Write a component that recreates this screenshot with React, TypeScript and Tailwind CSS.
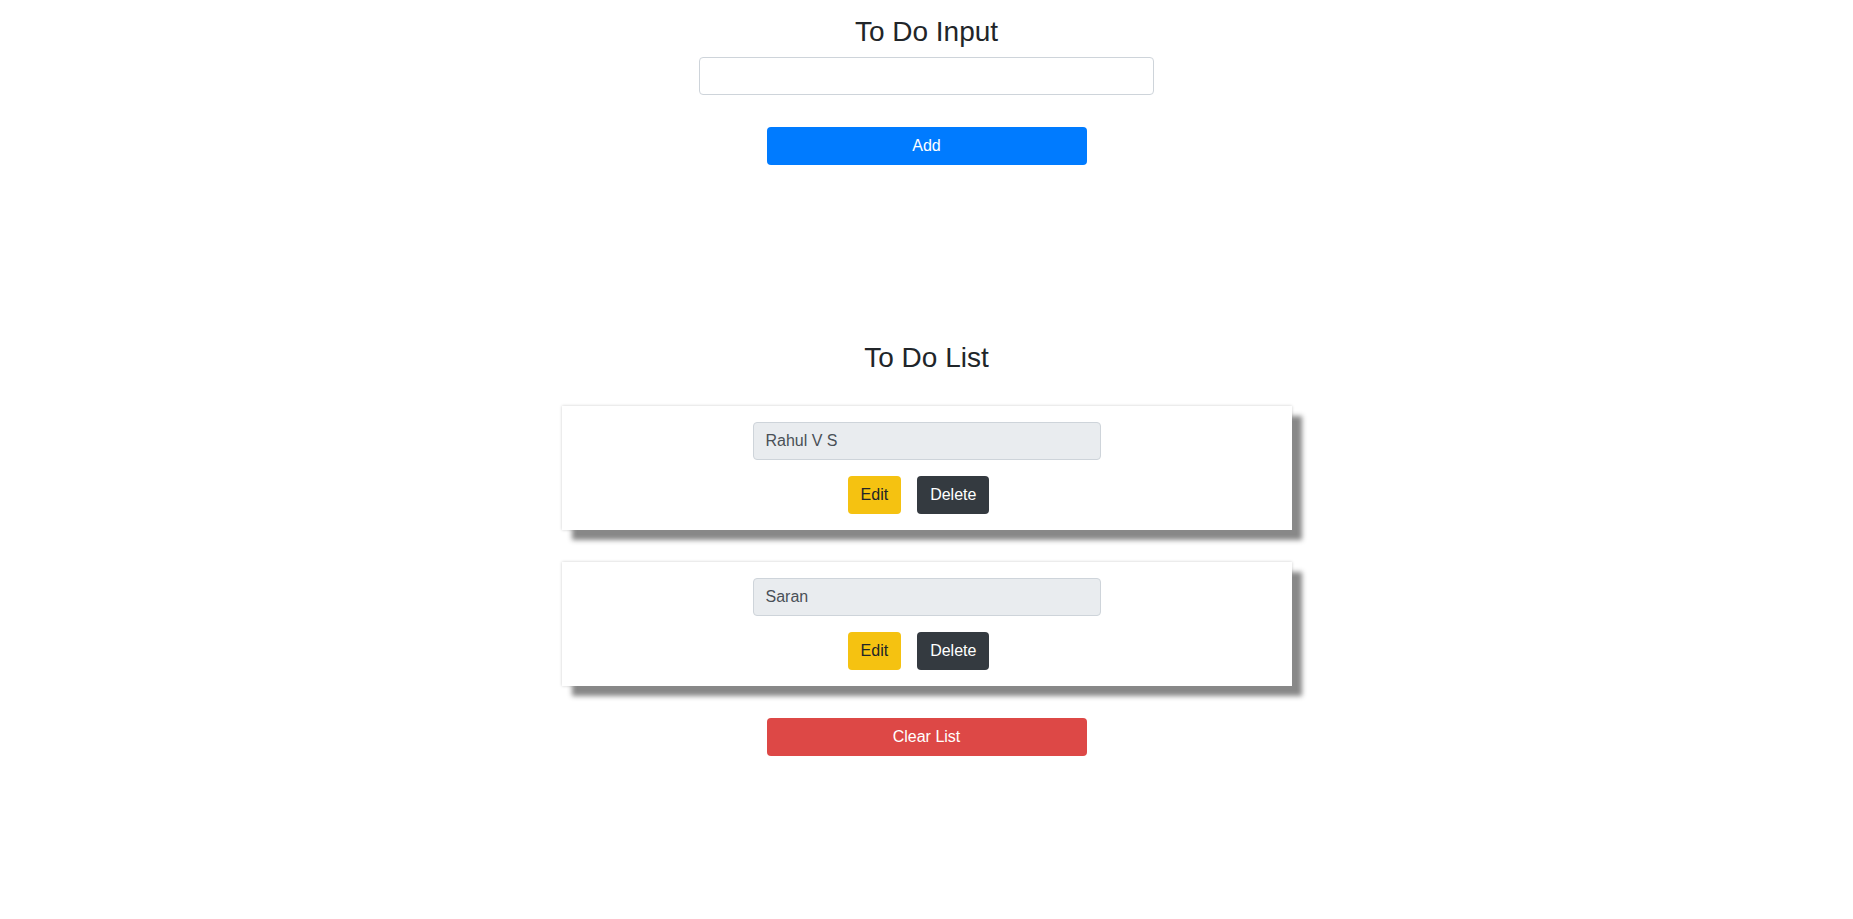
import { useState } from 'react'

type Item = { id: number; text: string }

export default function App() {
  const [value, setValue] = useState('')
  const [items, setItems] = useState<Item[]>([
    { id: 1, text: 'Rahul V S' },
    { id: 2, text: 'Saran' },
  ])

  function add() {
    if (!value.trim()) return
    setItems((l) => [...l, { id: Date.now(), text: value.trim() }])
    setValue('')
  }

  return (
    <div
      className="min-h-screen bg-white pt-[15px] text-[#212529]"
      style={{ fontFamily: '"Liberation Sans", Arial, sans-serif' }}
    >
      {/* input section */}
      <div className="flex flex-col items-center">
        <h3 className="mb-2 text-[28px] font-medium leading-[1.2]">To Do Input</h3>
        <input
          value={value}
          onChange={(e) => setValue(e.target.value)}
          className="h-[38px] w-[455px] rounded border border-[#ced4da] bg-white px-3 text-base text-[#495057] outline-none"
        />
        <button
          onClick={add}
          className="mt-8 h-[38px] w-[320px] rounded bg-[#007bff] text-base text-white"
        >
          Add
        </button>
      </div>

      {/* list section */}
      <div className="mt-[176px] flex flex-col items-center">
        <h3 className="mb-8 text-[28px] font-medium leading-[1.2]">To Do List</h3>
        <div className="flex flex-col gap-8">
          {items.map((item) => (
            <div
              key={item.id}
              className="flex w-[730px] flex-col items-center gap-4 bg-white py-4 shadow-[10px_10px_5px_#888888,0_0_3px_rgba(0,0,0,0.2)]"
            >
              <input
                readOnly
                value={item.text}
                className="h-[38px] w-[348px] rounded border border-[#ced4da] bg-[#e9ecef] px-3 text-base text-[#495057] outline-none"
              />
              <div className="flex">
                <button className="mr-4 h-[38px] rounded border border-transparent bg-[#f5c211] px-3 text-base text-[#212529]">
                  Edit
                </button>
                <button
                  onClick={() => setItems((l) => l.filter((x) => x.id !== item.id))}
                  className="mr-4 h-[38px] rounded border border-transparent bg-[#343a40] px-3 text-base text-white"
                >
                  Delete
                </button>
              </div>
            </div>
          ))}
        </div>
        <button
          onClick={() => setItems([])}
          className="mt-8 h-[38px] w-[320px] rounded bg-[#dd4846] text-base text-white"
        >
          Clear List
        </button>
      </div>
    </div>
  )
}
